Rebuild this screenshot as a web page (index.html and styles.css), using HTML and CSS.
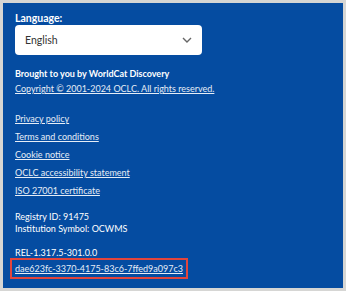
FILE: index.html
```html
<!DOCTYPE html>
<html lang="en">
<head>
    <meta charset="UTF-8">
    <meta name="viewport" content="width=device-width, initial-scale=1.0">
    <title>Footer</title>
    <link rel="stylesheet" href="styles.css">
</head>
<body>
    <footer class="footer">
        <!-- language -->
        <div class="lang">
            <label class="lang-label">Language:</label>
            <div class="select">
                <span>English</span>
                <svg width="10" height="6" viewBox="0 0 10 6"><path d="M1 1l4 4 4-4" fill="none" stroke="#666" stroke-width="1.4"/></svg>
            </div>
        </div>

        <div class="brought">
            <p class="strong">Brought to you by WorldCat Discovery</p>
            <a href="#">Copyright © 2001-2024 OCLC. All rights reserved.</a>
        </div>

        <ul class="links">
            <li><a href="#">Privacy policy</a></li>
            <li><a href="#">Terms and conditions</a></li>
            <li><a href="#">Cookie notice</a></li>
            <li><a href="#">OCLC accessibility statement</a></li>
            <li><a href="#">ISO 27001 certificate</a></li>
        </ul>

        <div class="info">
            <p>Registry ID: 91475</p>
            <p>Institution Symbol: OCWMS</p>
        </div>

        <div class="release">
            <p>REL-1.317.5-301.0.0</p>
            <a href="#" class="build">dae623fc-3370-4175-83c6-7ffed9a097c3</a>
        </div>
    </footer>
</body>
</html>
```

FILE: styles.css
```css
:root {
    --blue: #054ca1;
    --text: #ffffff;
    --link: #e6edf6;
}
body {
    margin: 0;
    background: #d6d6d4;
    font-family: Lato, "Open Sans", sans-serif;
}
.footer {
    margin: 3px;
    height: 285px;
    box-sizing: border-box;
    background: var(--blue);
    color: var(--text);
    padding: 9px 12px 0;
    font-size: 9px;
    line-height: 12px;
}
p {
    margin: 0;
}
a {
    color: var(--link);
    text-decoration: underline;
}
.lang-label {
    display: block;
    font-size: 10.5px;
    font-weight: bold;
    line-height: 12px;
    margin-bottom: 1px;
}
.select {
    width: 187px;
    height: 30px;
    box-sizing: border-box;
    background: #fff;
    border-radius: 4px;
    display: flex;
    align-items: center;
    justify-content: space-between;
    padding: 0 10px 0 10px;
    color: #333;
    font-size: 10.5px;
}
.brought {
    margin-top: 13px;
}
.strong {
    font-weight: bold;
    margin-bottom: 3px;
}
.links {
    list-style: none;
    margin: 18px 0 0;
    padding: 0;
}
.links li {
    margin-bottom: 6px;
}
.links li:last-child {
    margin-bottom: 0;
}
.info {
    margin-top: 14px;
}
.release {
    margin-top: 12px;
}
.release p {
    margin-bottom: 4px;
}
.build {
    display: inline-block;
    line-height: 11px;
    outline: 2px solid #e2453c;
    outline-offset: 3px;
}
```
